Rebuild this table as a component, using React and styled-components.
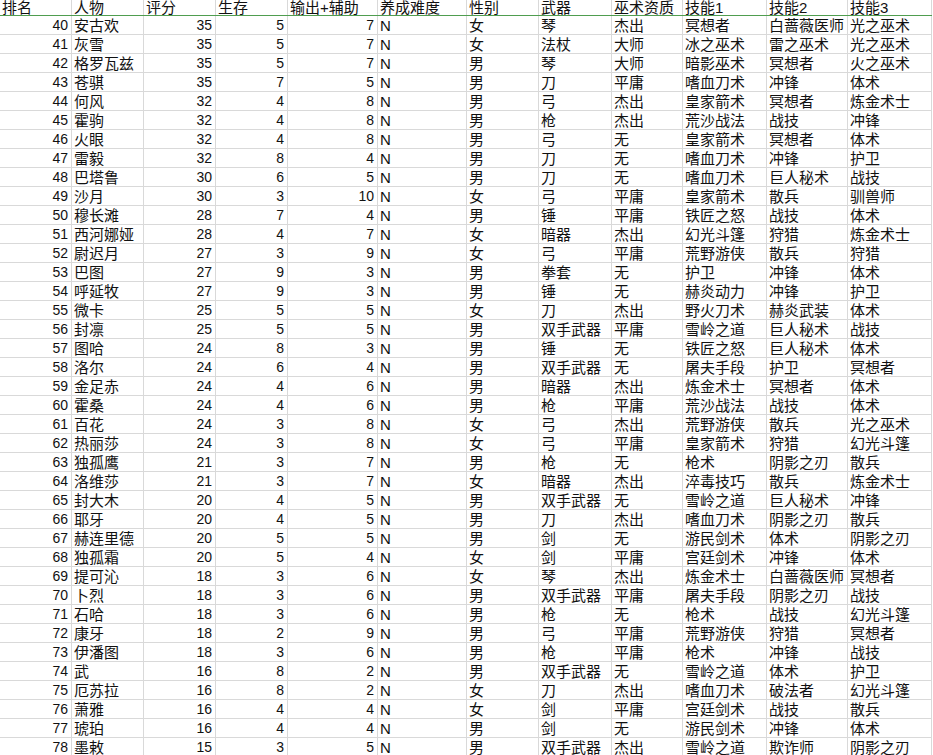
import styled, { createGlobalStyle } from "styled-components";

const GlobalStyle = createGlobalStyle`
  html, body {
    margin: 0;
    padding: 0;
    background: #ffffff;
  }
  body {
    font-family: "Liberation Sans", "Noto Sans CJK SC", sans-serif;
    color: #111;
    overflow: hidden;
  }
`;

const COLS = "72px 72px 72px 72px 90px 89px 72px 73px 71px 84px 81px 84px";

const Sheet = styled.div`
  width: 932px;
  height: 755px;
  overflow: hidden;
`;

const Row = styled.div`
  display: grid;
  grid-template-columns: ${COLS};
  height: ${(p) => (p.$head ? "16px" : "19px")};
  border-bottom: 1px solid ${(p) => (p.$head ? "#4f9d4f" : "#d9d9d9")};
  box-sizing: border-box;
`;

const Cell = styled.div`
  box-sizing: border-box;
  border-right: 1px solid #d9d9d9;
  padding: ${(p) => (p.$num ? "0 3px 0 0" : "0 0 0 2px")};
  text-align: ${(p) => (p.$num ? "right" : "left")};
  font-size: ${(p) => (p.$num ? "14px" : "15px")};
  line-height: ${(p) => (p.$head ? "15px" : "19px")};
  white-space: nowrap;
  overflow: hidden;
`;

const headers = ["排名", "人物", "评分", "生存", "输出+辅助", "养成难度", "性别", "武器", "巫术资质", "技能1", "技能2", "技能3"];

// 排名 人物 评分 生存 输出 难度 性别 武器 资质 技能1 技能2 技能3
const raw = `40 安古欢 35 5 7 N 女 琴 杰出 冥想者 白蔷薇医师 光之巫术
41 灰雪 35 5 7 N 女 法杖 大师 冰之巫术 雷之巫术 光之巫术
42 格罗瓦兹 35 5 7 N 男 琴 大师 暗影巫术 冥想者 火之巫术
43 苍骐 35 7 5 N 男 刀 平庸 嗜血刀术 冲锋 体术
44 何风 32 4 8 N 男 弓 杰出 皇家箭术 冥想者 炼金术士
45 霍驹 32 4 8 N 男 枪 杰出 荒沙战法 战技 冲锋
46 火眼 32 4 8 N 男 弓 无 皇家箭术 冥想者 体术
47 雷毅 32 8 4 N 男 刀 无 嗜血刀术 冲锋 护卫
48 巴塔鲁 30 6 5 N 男 刀 无 嗜血刀术 巨人秘术 战技
49 沙月 30 3 10 N 女 弓 平庸 皇家箭术 散兵 驯兽师
50 穆长滩 28 7 4 N 男 锤 平庸 铁匠之怒 战技 体术
51 西河娜娅 28 4 7 N 女 暗器 杰出 幻光斗篷 狩猎 炼金术士
52 尉迟月 27 3 9 N 女 弓 平庸 荒野游侠 散兵 狩猎
53 巴图 27 9 3 N 男 拳套 无 护卫 冲锋 体术
54 呼延牧 27 9 3 N 男 锤 无 赫炎动力 冲锋 护卫
55 微卡 25 5 5 N 女 刀 杰出 野火刀术 赫炎武装 体术
56 封凛 25 5 5 N 男 双手武器 平庸 雪岭之道 巨人秘术 战技
57 图哈 24 8 3 N 男 锤 无 铁匠之怒 巨人秘术 体术
58 洛尔 24 6 4 N 男 双手武器 无 屠夫手段 护卫 冥想者
59 金足赤 24 4 6 N 男 暗器 杰出 炼金术士 冥想者 体术
60 霍桑 24 4 6 N 男 枪 平庸 荒沙战法 战技 体术
61 百花 24 3 8 N 女 弓 杰出 荒野游侠 散兵 光之巫术
62 热丽莎 24 3 8 N 女 弓 平庸 皇家箭术 狩猎 幻光斗篷
63 独孤鹰 21 3 7 N 男 枪 无 枪术 阴影之刃 散兵
64 洛维莎 21 3 7 N 女 暗器 杰出 淬毒技巧 散兵 炼金术士
65 封大木 20 4 5 N 男 双手武器 无 雪岭之道 巨人秘术 冲锋
66 耶牙 20 4 5 N 男 刀 杰出 嗜血刀术 阴影之刃 散兵
67 赫连里德 20 5 5 N 男 剑 无 游民剑术 体术 阴影之刃
68 独孤霜 20 5 4 N 女 剑 平庸 宫廷剑术 冲锋 体术
69 提可沁 18 3 6 N 女 琴 杰出 炼金术士 白蔷薇医师 冥想者
70 卜烈 18 3 6 N 男 双手武器 平庸 屠夫手段 阴影之刃 战技
71 石哈 18 3 6 N 男 枪 无 枪术 战技 幻光斗篷
72 康牙 18 2 9 N 男 弓 平庸 荒野游侠 狩猎 冥想者
73 伊潘图 18 3 6 N 男 枪 平庸 枪术 冲锋 战技
74 武 16 8 2 N 男 双手武器 无 雪岭之道 体术 护卫
75 厄苏拉 16 8 2 N 女 刀 杰出 嗜血刀术 破法者 幻光斗篷
76 萧雅 16 4 4 N 女 剑 平庸 宫廷剑术 战技 散兵
77 琥珀 16 4 4 N 男 剑 无 游民剑术 冲锋 体术
78 墨敕 15 3 5 N 男 双手武器 杰出 雪岭之道 欺诈师 阴影之刃`;

const rows = raw.split("\n").map((line) => line.trim().split(" "));
const numericCols = [0, 2, 3, 4];

export default function App() {
    return (
        <>
            <GlobalStyle />
            <Sheet>
                <Row $head>
                    {headers.map((h) => (
                        <Cell key={h} $head>{h}</Cell>
                    ))}
                </Row>
                {rows.map((r) => (
                    <Row key={r[0]}>
                        {r.map((v, i) => (
                            <Cell key={i} $num={numericCols.includes(i)}>{v}</Cell>
                        ))}
                    </Row>
                ))}
            </Sheet>
        </>
    );
}
